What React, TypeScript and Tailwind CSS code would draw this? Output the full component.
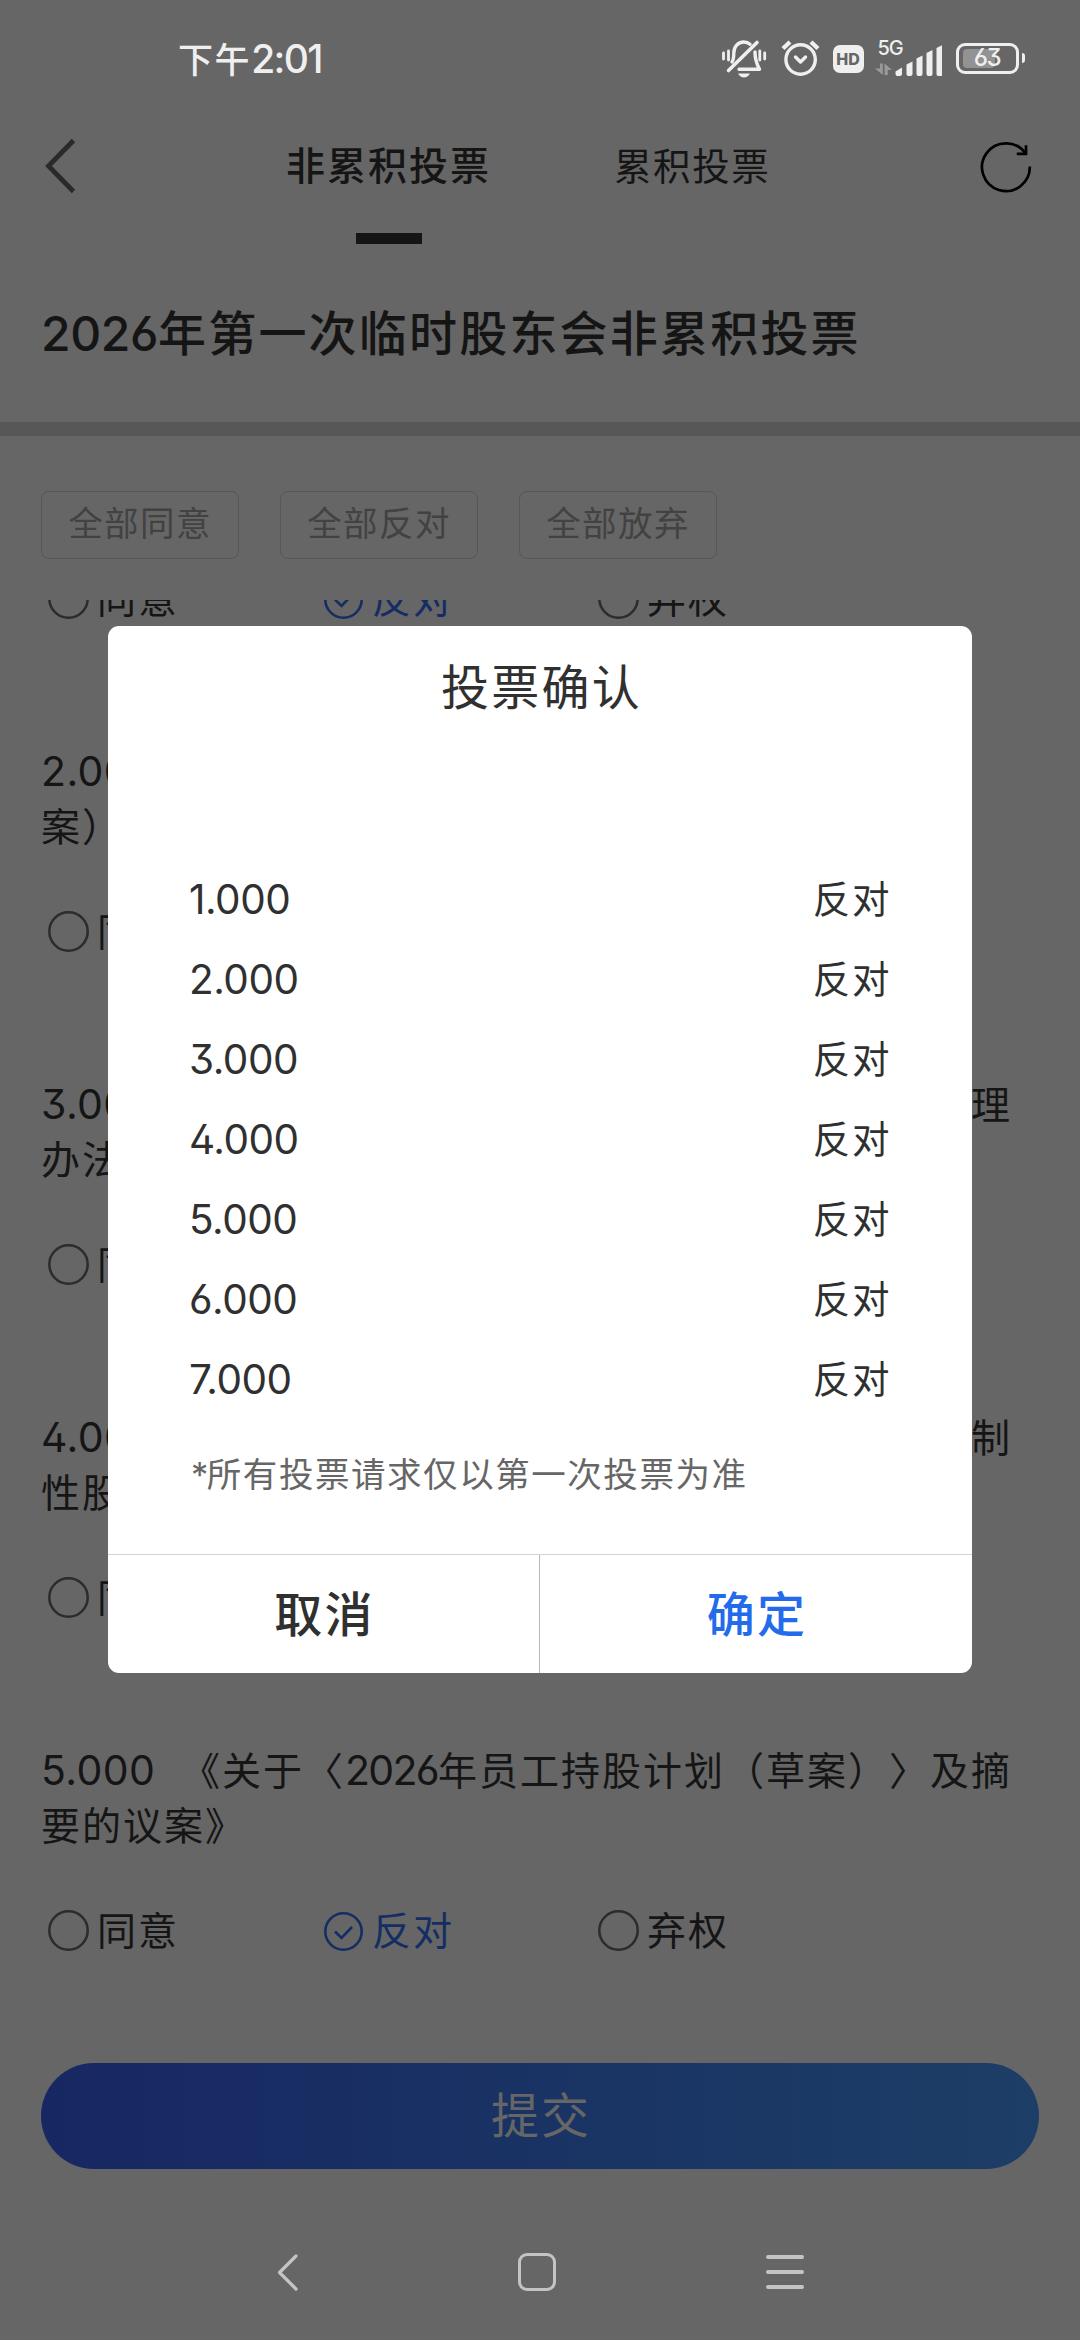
import React from "react";

const FONT =
  "font-['Inter','Noto_Sans_CJK_SC',sans-serif] [text-spacing-trim:space-all] [font-feature-settings:'cv09','ss01']";

function StatusBar() {
  return (
    <header className="flex h-[116px] shrink-0 items-center pl-[178px] pr-[55px] text-[#efefef]">
      <div className="w-[160px] whitespace-nowrap pt-[2px] text-[35px] font-medium leading-[50px] tracking-[1.6px]">
        下午<span className="text-[39px] font-medium tracking-[-1.700px]">2:01</span>
      </div>
      <div className="ml-auto flex items-center">
        <svg className="h-[40px] w-[46px]" viewBox="20 19 46 40" fill="none" stroke="currentColor" strokeLinecap="round">
          <path d="M56 23.500 27.500 51.500" strokeWidth="3.6" />
          <path d="M31 43c1.5-2 1.8-5 1.8-9 0-6.500 4.200-11 10-11 2.600 0 4.600.8 6.200 2.200M54 33c0 7 .8 10.500 4.500 17.200H38" strokeWidth="3.4" strokeLinejoin="round" />
          <path d="M37 54.500h12c-1.500 2.700-3.500 4-6 4s-4.500-1.300-6-4Z" fill="currentColor" stroke="none" />
          <path d="M22.500 34v6M27.500 32v9M58.800 32v9M63.700 34v6" strokeWidth="2.8" />
        </svg>
        <svg className="ml-[13px] h-[40px] w-[42px]" viewBox="79 19 42 40" fill="none" stroke="currentColor" strokeLinecap="round" strokeLinejoin="round">
          <circle cx="99.600" cy="40.500" r="14.700" strokeWidth="3.400" />
          <path d="m94.500 38 5 5 5-5" strokeWidth="3.400" />
          <path d="m82 29.500 7-6.500M110 23l7 6.500" strokeWidth="4.400" strokeLinecap="butt" />
        </svg>
        <div className="ml-[11px] mt-[1px] flex h-[28px] w-[31px] items-center justify-center rounded-[7px] bg-[#efefef] text-[16px] font-extrabold leading-none text-[#666]">
          HD
        </div>
        <div className="ml-[11px] flex h-[36px] w-[68px] items-end">
          <div className="flex h-[36px] w-[20px] flex-col">
            <span className="w-[30px] pl-[3px] text-[20px] font-medium leading-[17px] tracking-[-1px]">5G</span>
            <svg className="mt-auto h-[14px] w-[17px]" viewBox="0 0 17 14" fill="#999">
              <path d="M5 1.500h2.800V13L0 6.500h5ZM9.500 1.500 17 8h-4.200v5H9.500Z" />
            </svg>
          </div>
          <svg className="h-[31px] w-[47px]" viewBox="193 24 47 31" fill="currentColor">
            <path d="M193.500 50.500l6.500-4V53q0 2-2 2h-2.500q-2 0-2-2ZM204.500 43.500l6-3V53q0 2-2 2h-2q-2 0-2-2ZM214.500 37.500l6-3V53q0 2-2 2h-2q-2 0-2-2ZM224.500 32l6-3V53q0 2-2 2h-2q-2 0-2-2ZM234.500 27l6-3V53q0 2-2 2h-2q-2 0-2-2Z" />
          </svg>
        </div>
        <div className="ml-[13px] flex items-center">
          <div className="relative flex h-[31px] w-[63px] items-center justify-center rounded-[9px] border-[3px] border-[#efefef]">
            <div className="absolute left-[4px] top-[3px] h-[19px] w-[32px] rounded-[4px] bg-[#929292]" />
            <span className="relative text-[24px] font-medium leading-none tracking-[-1.500px]">63</span>
          </div>
          <div className="ml-[3px] h-[10px] w-[3.500px] rounded-r-[3px] bg-[#efefef]" />
        </div>
      </div>
    </header>
  );
}

function TabBar() {
  return (
    <nav className="flex h-[144px] shrink-0 text-[#151515]">
      <svg className="ml-[44px] mt-[22px] h-[56px] w-[34px]" viewBox="0 0 34 56" fill="none" stroke="#2a2a2a" strokeWidth="4.800">
        <path d="M29.500 2.500 4.500 28l25 25.500" />
      </svg>
      <div className="ml-[208px] flex w-[205px] flex-col items-center">
        <span className="mt-[22px] whitespace-nowrap text-[39px] font-medium leading-[56px] tracking-[2px]">非累积投票</span>
        <div className="mt-[39px] h-[11px] w-[66px] bg-[#151515]" />
      </div>
      <span className="ml-[123px] mt-[23px] text-[37.500px] leading-[56px] tracking-[1.600px]">累积投票</span>
      <svg className="ml-auto mr-[47px] mt-[24px] h-[54px] w-[54px]" viewBox="979 140 54 54" fill="none" stroke="#000" strokeWidth="2.700">
        <path d="M1029.800 166.500a23.900 23.900 0 1 1-4.300-13" />
        <path d="M1026 145.200v8.600h-9.200" />
      </svg>
    </nav>
  );
}

function Radio({ label, checked }: { label: string; checked?: boolean }) {
  return (
    <div className={checked ? "flex w-[275px] items-center text-[#142d63]" : "flex w-[275px] items-center text-[#151515]"}>
      {checked ? (
        <svg className="h-[42px] w-[42px]" viewBox="0 0 42 42" fill="none" stroke="currentColor" strokeWidth="2.600">
          <circle cx="20.500" cy="21.500" r="18.200" />
          <path d="m12 21.500 6.500 6.500 10.500-11" />
        </svg>
      ) : (
        <svg className="h-[42px] w-[42px]" viewBox="0 0 42 42" fill="none" stroke="#2c2c2c" strokeWidth="2.500">
          <circle cx="20.500" cy="20.500" r="19.200" />
        </svg>
      )}
      <span className="ml-[7px] text-[39px] leading-[56px] tracking-[2px]">{label}</span>
    </div>
  );
}

function Choices() {
  return (
    <div className="flex h-[56px] pl-[48px]">
      <Radio label="同意" />
      <Radio label="反对" checked />
      <Radio label="弃权" />
    </div>
  );
}

type Motion = { id: string; before: string; after: string; rest: string };

const motions: Motion[] = [
  { id: "2.000", before: "《关于〈", after: "年股票激励计划（草", rest: "案）〉的议案》" },
  { id: "3.000", before: "《关于〈", after: "年股票激励计划考核管理", rest: "办法〉的议案》" },
  { id: "4.000", before: "《关于提请办理", after: "年限制", rest: "性股票相关事宜的议案》" },
  { id: "5.000", before: "《关于〈", after: "年员工持股计划（草案）〉及摘", rest: "要的议案》" },
];

function MotionItem({ m }: { m: Motion }) {
  const reachesEdge = m.id !== "2.000";
  return (
    <section className="mt-[117px]">
      <div className="h-[110px] pl-[41px] text-[39px] leading-[55px] tracking-[2px] text-[#151515]">
        <div className="flex w-[971px] whitespace-nowrap">
          <span className="w-[137px] shrink-0 text-[41px] tracking-[0.400px]">{m.id}</span>
          <span className={reachesEdge ? "ml-auto" : ""}>
            {m.before}
            <span className="text-[41px] tracking-[-1.700px]">2026</span>
            {m.after}
          </span>
        </div>
        <div>{m.rest}</div>
      </div>
      <div className="mt-[50px]">
        <Choices />
      </div>
    </section>
  );
}

function ConfirmDialog() {
  const ids = ["1.000", "2.000", "3.000", "4.000", "5.000", "6.000", "7.000"];
  return (
    <div className="absolute left-[108px] top-[626px] flex h-[1047px] w-[864px] flex-col overflow-hidden rounded-[11px] bg-white text-[#303030]">
      <h2 className="mt-[34px] pl-[3px] text-center text-[48px] leading-[56px] tracking-[2.200px]">投票确认</h2>
      <div className="mt-[144px] flex flex-col pl-[81px] pr-[81px]">
        {ids.map((id) => (
          <div key={id} className="flex h-[80px] items-center justify-between">
            <span className="text-[40.500px] tracking-[-0.500px]">{id}</span>
            <span className="text-[37.500px] tracking-[1.600px]">反对</span>
          </div>
        ))}
      </div>
      <p className="mt-[30px] pl-[83px] text-[34.500px] leading-[50px] tracking-[1.550px] text-[#666]">
        <span className="tracking-[-1.500px]">*</span>所有投票请求仅以第一次投票为准
      </p>
      <div className="mt-auto flex h-[119px] border-t border-[#d4d4d4] text-[48px] font-medium tracking-[2.200px]">
        <button className="w-[432px] border-r border-[#b8b8b8] pl-[2px] pt-[2px]">取消</button>
        <button className="w-[432px] pl-[2px] pt-[2px] text-[#246bec]">确定</button>
      </div>
    </div>
  );
}

export default function App() {
  return (
    <div className={`relative flex h-[2340px] w-[1080px] flex-col overflow-hidden bg-[#666] ${FONT}`}>
      <StatusBar />
      <TabBar />
      <h1 className="flex h-[162px] shrink-0 items-center whitespace-nowrap pb-[14px] pl-[41px] text-[48px] font-medium tracking-[2.200px] text-[#151515]">
        <span className="tracking-[-0.400px]">2026</span>年第一次临时股东会非累积投票
      </h1>
      <div className="h-[14px] shrink-0 bg-[#575757]" />
      <div className="mt-[55px] flex shrink-0 gap-[41px] pl-[41px]">
        {["全部同意", "全部反对", "全部放弃"].map((t) => (
          <button key={t} className="h-[68px] w-[198px] rounded-[8px] border border-[#575757] pb-[3px] text-[34.500px] tracking-[1.400px] text-[#424242]">
            {t}
          </button>
        ))}
      </div>
      <main className="mt-[41px] h-[1440px] shrink-0 overflow-hidden">
        <div className="-mt-[29px]">
          <Choices />
          {motions.map((m) => (
            <MotionItem key={m.id} m={m} />
          ))}
        </div>
      </main>
      <button className="mx-[41px] mt-[23px] h-[106px] shrink-0 rounded-full bg-linear-to-r from-[#172762] to-[#1d3e66] pl-[2px] text-[48px] tracking-[2px] text-[#666]">
        提交
      </button>
      <footer className="flex h-[171px] items-end pb-[36px] pl-[268px]">
        <div className="flex h-[64px] items-center">
          <svg className="h-[44px] w-[36px]" viewBox="268 2250 36 44" fill="none" stroke="#c4c4c4" strokeWidth="3.200" strokeLinecap="round" strokeLinejoin="round">
            <path d="M296 2256 279.500 2272.500 296 2289" />
          </svg>
          <div className="ml-[214px] h-[38px] w-[38px] rounded-[9px] border-[3.500px] border-[#c4c4c4]" />
          <div className="ml-[210px] flex w-[38px] flex-col gap-[11px]">
            <div className="h-[4px] rounded-full bg-[#c4c4c4]" />
            <div className="h-[4px] rounded-full bg-[#c4c4c4]" />
            <div className="h-[4px] rounded-full bg-[#c4c4c4]" />
          </div>
        </div>
      </footer>
      <ConfirmDialog />
    </div>
  );
}
